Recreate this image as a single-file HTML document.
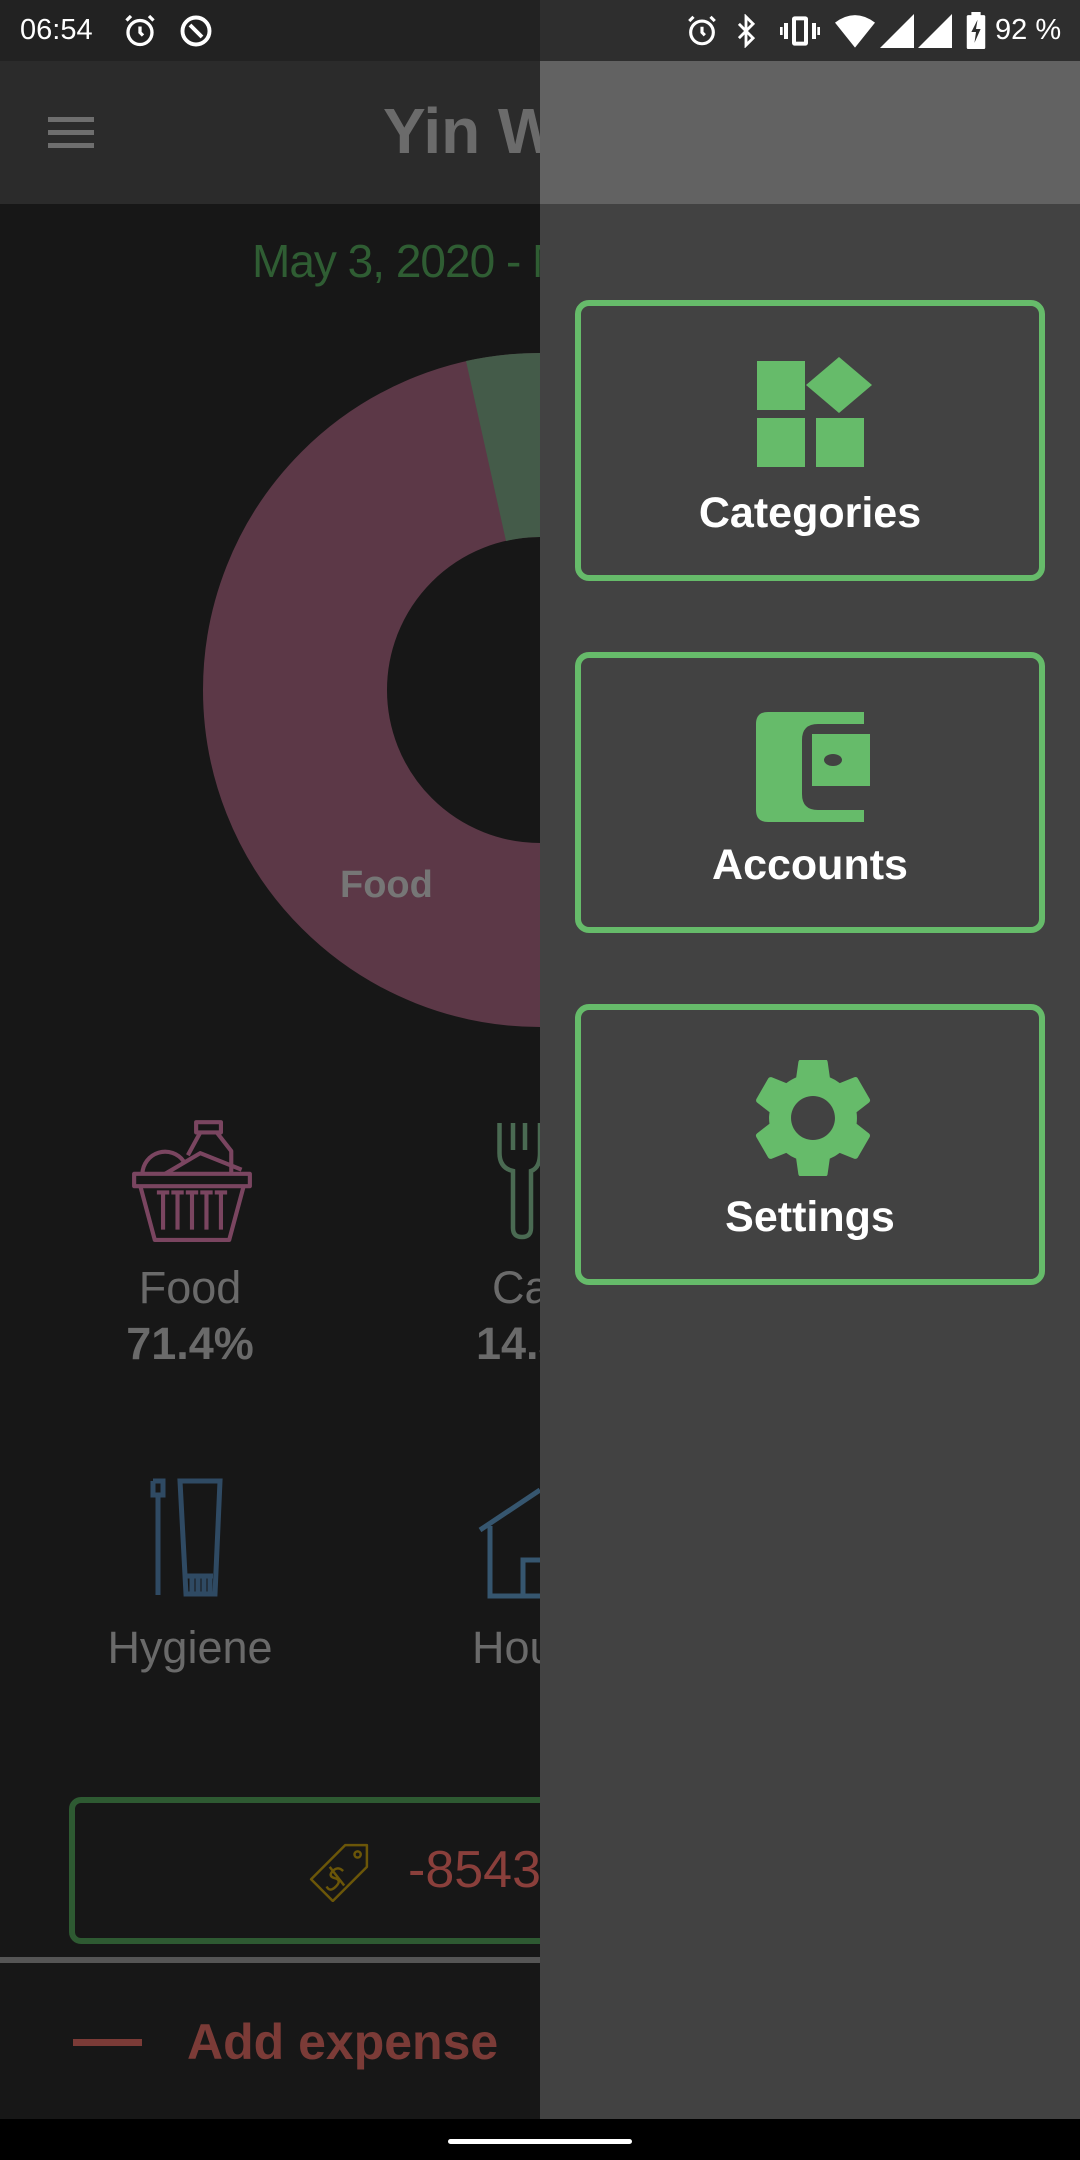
<!DOCTYPE html>
<html><head><meta charset="utf-8"><style>
*{margin:0;padding:0;box-sizing:border-box}
body{width:1080px;height:2160px;background:#171717;position:relative;overflow:hidden;font-family:"Liberation Sans",sans-serif}
.a{position:absolute}
.btn{position:absolute;left:575px;width:470px;height:281px;border:6px solid #66bb6a;border-radius:14px}
.btn span{position:absolute;left:0;right:0;top:183px;text-align:center;color:#fff;font-size:43px;font-weight:bold}
.g{color:#6a6a6a}
</style></head><body>
<!-- status bar -->
<div class="a" style="left:0;top:0;width:540px;height:61px;background:#222"></div>
<div class="a" style="left:540px;top:0;width:540px;height:61px;background:#2e2e2e"></div>
<div class="a" style="left:20px;top:14px;color:#fff;font-size:29px">06:54</div>
<svg class="a" style="left:122px;top:13px" width="36" height="36" viewBox="0 0 24 24" fill="none" stroke="#fff" stroke-width="2.2"><circle cx="12" cy="13" r="8"/><path d="M12 9v4l2 2M3 5l3-3M21 5l-3-3"/></svg>
<svg class="a" style="left:178px;top:13px" width="36" height="36" viewBox="0 0 24 24" fill="none" stroke="#fff" stroke-width="2.6"><circle cx="12" cy="12" r="9"/><path d="M8 8l8 8"/></svg>
<svg class="a" style="left:685px;top:13px" width="34" height="36" viewBox="0 0 24 24" fill="none" stroke="#fff" stroke-width="2.2"><circle cx="12" cy="13" r="8"/><path d="M12 9v4l2 2M3 5l3-3M21 5l-3-3"/></svg>
<svg class="a" style="left:733px;top:14px" width="26" height="34" viewBox="0 0 16 24" fill="none" stroke="#fff" stroke-width="2"><path d="M3 7l10 10-5 5V2l5 5L3 17"/></svg>
<svg class="a" style="left:780px;top:15px" width="40" height="32" viewBox="0 0 30 24" fill="#fff"><rect x="9" y="1" width="12" height="22" rx="2"/><rect x="12" y="4" width="6" height="16" fill="#2e2e2e"/><rect x="3" y="6" width="3" height="12"/><rect x="24" y="6" width="3" height="12"/><rect x="0" y="9" width="2" height="6"/><rect x="28" y="9" width="2" height="6"/></svg>
<svg class="a" style="left:835px;top:14px" width="40" height="34" viewBox="0 0 24 20" fill="#fff"><path d="M0 5Q12-4 24 5L12 20Z"/></svg>
<svg class="a" style="left:880px;top:14px" width="34" height="34" viewBox="0 0 24 24" fill="#fff"><path d="M24 0V24H0Z"/></svg>
<svg class="a" style="left:918px;top:14px" width="34" height="34" viewBox="0 0 24 24" fill="#fff"><path d="M24 0V24H0Z"/></svg>
<svg class="a" style="left:966px;top:12px" width="20" height="37" viewBox="0 0 12 24" fill="#fff"><rect x="3" y="0" width="6" height="3"/><rect x="0" y="2" width="12" height="22" rx="1"/><path d="M7 5L3 13h3l-1 7 4-9H6z" fill="#2e2e2e"/></svg>
<div class="a" style="left:995px;top:14px;color:#fff;font-size:29px">92 %</div>

<!-- app bar -->
<div class="a" style="left:0;top:61px;width:540px;height:143px;background:#2b2b2b"></div>
<div class="a" style="left:48px;top:117px;width:46px;height:5px;background:#6e6e6e;box-shadow:0 13px 0 #6e6e6e,0 26px 0 #6e6e6e"></div>
<div class="a" style="left:383px;top:94px;color:#6b6b6b;font-size:64px;font-weight:bold;white-space:nowrap">Yin Wallet</div>
<div class="a" style="left:252px;top:234px;color:#2f5d33;font-size:46px;white-space:nowrap;letter-spacing:-1px">May 3, 2020 - May 9, 2020</div>

<!-- donut -->
<svg class="a" style="left:0;top:0" width="1080" height="2160">
<circle cx="540" cy="690" r="245" fill="none" stroke="#5c3847" stroke-width="184"/>
<path d="M540 353 A337 337 0 0 1 700 394 L613 541 A153 153 0 0 0 540 537Z" fill="#445b49"/>
<path d="M466 361 A337 337 0 0 1 540 353 L540 537 A153 153 0 0 0 506 541Z" fill="#445b49"/>
</svg>
<div class="a" style="left:340px;top:864px;color:#767676;font-size:38px;font-weight:bold">Food</div>

<!-- categories -->
<svg class="a" style="left:130px;top:1118px" width="124" height="124" viewBox="0 0 120 120" fill="none" stroke="#7a4560" stroke-width="4" stroke-linejoin="round"><path d="M4 54h112v12H4zM10 66l14 52h72l14-52M32 72v36M46 72v36M60 72v36M74 72v36M88 72v36M26 72h12M40 72h12M54 72h12M68 72h12M82 72h12"/><path d="M12 54a22 22 0 0 1 40-12M34 54l34-20 40 16M64 4h24v10H64zM68 14l-12 22M84 14l14 18v22"/></svg>
<div class="a g" style="left:0;width:380px;top:1262px;text-align:center;font-size:45px">Food</div>
<div class="a g" style="left:0;width:380px;top:1318px;text-align:center;font-size:45px;font-weight:bold">71.4%</div>
<svg class="a" style="left:495px;top:1118px" width="45" height="124" viewBox="0 0 30 80" fill="none" stroke="#4a6a52" stroke-width="3"><path d="M3 2v20q0 10 9 12v38q0 6 6 6t6-6V34q6-2 6-12V2M12 2v18M20 2v18"/></svg>
<div class="a g" style="left:492px;top:1262px;font-size:45px">Ca</div>
<div class="a g" style="left:476px;top:1318px;font-size:45px;font-weight:bold">14.3%</div>

<svg class="a" style="left:145px;top:1478px" width="90" height="122" viewBox="0 0 90 122" fill="none" stroke="#2f4a63" stroke-width="5"><path d="M8 3h10v14h-5v100M8 3v14h5M35 3h40l-5 113H41L35 3zM42 98h26M47 100v14M53 100v14M59 100v14M65 100v14"/></svg>
<div class="a g" style="left:0;width:380px;top:1622px;text-align:center;font-size:45px">Hygiene</div>
<svg class="a" style="left:478px;top:1478px" width="62" height="122" viewBox="0 0 62 122" fill="none" stroke="#36566f" stroke-width="5"><path d="M2 52L62 12M12 48v70h50M45 118V82h17"/></svg>
<div class="a g" style="left:472px;top:1622px;font-size:45px">House</div>

<!-- amount box -->
<div class="a" style="left:69px;top:1797px;width:600px;height:147px;border:6px solid #2e5a32;border-radius:12px"></div>
<svg class="a" style="left:308px;top:1840px" width="62" height="62" viewBox="0 0 60 60" fill="none" stroke="#6b5608" stroke-width="2.4" stroke-linejoin="round"><path d="M3 38L36 5h21v21L24 59z"/><circle cx="48" cy="14" r="3"/><path d="M34 30q-5-5-10 0t2 7t1 8t-9 0M21 26l14 18"/></svg>
<div class="a" style="left:408px;top:1840px;color:#8a3f3b;font-size:52px;white-space:nowrap">-8543.00</div>
<div class="a" style="left:0;top:1957px;width:540px;height:6px;background:#555"></div>
<div class="a" style="left:73px;top:2039px;width:69px;height:7px;background:#7b3b37"></div>
<div class="a" style="left:187px;top:2013px;color:#7b3b37;font-size:50px;font-weight:bold;white-space:nowrap">Add expense</div>

<!-- drawer -->
<div class="a" style="left:540px;top:61px;width:540px;height:2058px;background:#424242"></div>
<div class="a" style="left:540px;top:61px;width:540px;height:143px;background:#626262"></div>
<div class="btn" style="top:300px">
<svg class="a" style="left:175px;top:50px" width="116" height="112" viewBox="0 0 116 112" fill="#66bb6a"><rect x="1" y="5" width="48" height="49"/><rect x="1" y="62" width="48" height="49"/><rect x="60" y="62" width="48" height="49"/><path d="M50 29L83 1l33 28-33 28z"/></svg>
<span>Categories</span></div>
<div class="btn" style="top:652px">
<svg class="a" style="left:175px;top:54px" width="114" height="110" viewBox="0 0 114 110" fill="#66bb6a"><path d="M12 0h96v12H62q-16 0-16 16v54q0 16 16 16h46v12H12Q0 110 0 98V12Q0 0 12 0z"/><path d="M56 22h58v52H56z"/><ellipse cx="77" cy="48" rx="9" ry="6" fill="#424242"/></svg>
<span>Accounts</span></div>
<div class="btn" style="top:1004px">
<svg class="a" style="left:174px;top:50px" width="116" height="116" viewBox="2.5 2.5 19 19" fill="#66bb6a"><path d="M19.14 12.94c.04-.3.06-.61.06-.94 0-.32-.02-.64-.07-.94l2.03-1.58a.49.49 0 00.12-.61l-1.92-3.32a.488.488 0 00-.59-.22l-2.39.96c-.5-.38-1.03-.7-1.62-.94l-.36-2.54a.484.484 0 00-.48-.41h-3.84c-.24 0-.43.17-.47.41l-.36 2.54c-.59.24-1.13.57-1.62.94l-2.39-.96c-.22-.08-.47 0-.59.22L2.74 8.87c-.12.21-.08.47.12.61l2.03 1.58c-.05.3-.09.63-.09.94s.02.64.07.94l-2.03 1.58a.49.49 0 00-.12.61l1.92 3.32c.12.22.37.29.59.22l2.39-.96c.5.38 1.030.7 1.62.94l.36 2.54c.05.24.24.41.48.41h3.84c.24 0 .44-.17.47-.41l.36-2.54c.59-.24 1.13-.56 1.62-.94l2.39.96c.22.08.47 0 .59-.22l1.92-3.32c.12-.22.07-.47-.12-.61l-2.01-1.58zM12 15.6c-1.98 0-3.6-1.62-3.6-3.6s1.62-3.6 3.6-3.6 3.6 1.62 3.6 3.6-1.62 3.6-3.6 3.6z"/></svg>
<span>Settings</span></div>

<!-- nav bar -->
<div class="a" style="left:0;top:2119px;width:1080px;height:41px;background:#000"></div>
<div class="a" style="left:448px;top:2139px;width:184px;height:5px;border-radius:3px;background:#fff"></div>
</body></html>
